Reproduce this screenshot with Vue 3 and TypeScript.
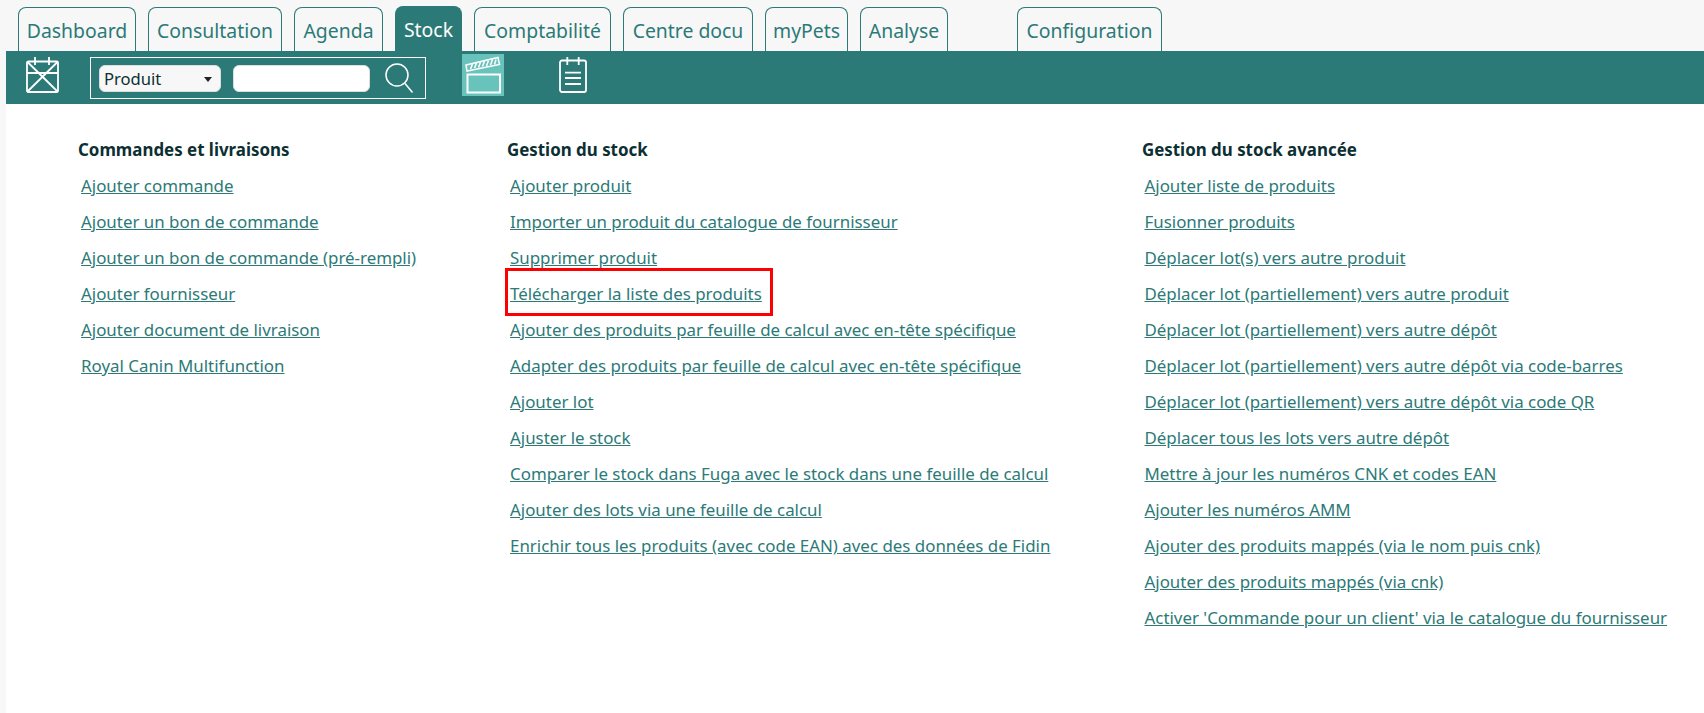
<script setup lang="ts">
const tabs = [
  { label: 'Dashboard', w: 118 },
  { label: 'Consultation', w: 134 },
  { label: 'Agenda', w: 89 },
  { label: 'Stock', w: 67, active: true },
  { label: 'Comptabilité', w: 137 },
  { label: 'Centre docu', w: 130 },
  { label: 'myPets', w: 83 },
  { label: 'Analyse', w: 88 },
]
const columns = [
  { title: 'Commandes et livraisons', cls: 'c1', links: ['Ajouter commande', 'Ajouter un bon de commande', 'Ajouter un bon de commande (pré-rempli)', 'Ajouter fournisseur', 'Ajouter document de livraison', 'Royal Canin Multifunction'] },
  { title: 'Gestion du stock', cls: 'c2', links: ['Ajouter produit', 'Importer un produit du catalogue de fournisseur', 'Supprimer produit', 'Télécharger la liste des produits', 'Ajouter des produits par feuille de calcul avec en-tête spécifique', 'Adapter des produits par feuille de calcul avec en-tête spécifique', 'Ajouter lot', 'Ajuster le stock', 'Comparer le stock dans Fuga avec le stock dans une feuille de calcul', 'Ajouter des lots via une feuille de calcul', 'Enrichir tous les produits (avec code EAN) avec des données de Fidin'] },
  { title: 'Gestion du stock avancée', cls: 'c3', links: ['Ajouter liste de produits', 'Fusionner produits', 'Déplacer lot(s) vers autre produit', 'Déplacer lot (partiellement) vers autre produit', 'Déplacer lot (partiellement) vers autre dépôt', 'Déplacer lot (partiellement) vers autre dépôt via code-barres', 'Déplacer lot (partiellement) vers autre dépôt via code QR', 'Déplacer tous les lots vers autre dépôt', 'Mettre à jour les numéros CNK et codes EAN', 'Ajouter les numéros AMM', 'Ajouter des produits mappés (via le nom puis cnk)', 'Ajouter des produits mappés (via cnk)', "Activer 'Commande pour un client' via le catalogue du fournisseur"] },
]
</script>

<template>
  <div class="page">
    <nav class="tabs">
      <a v-for="t in tabs" :key="t.label" class="tab" :class="{ active: t.active }" :style="{ width: t.w + 'px' }">{{ t.label }}</a>
      <a class="tab config">Configuration</a>
    </nav>
    <div class="bar">
      <svg class="ico cal" width="36" height="38" viewBox="0 0 36 38" fill="none" stroke="#fff" stroke-width="1.8">
        <rect x="2" y="4.500" width="31" height="30.500" rx="1.500" />
        <path d="M10 0v8M24 0v8M2 16h31M2 4.500L33 35M33 4.500L2 35" />
      </svg>
      <div class="search">
        <div class="select">Produit<span class="caret"></span></div>
        <div class="input"></div>
        <svg class="lens" width="30" height="31" viewBox="0 0 30 31" fill="none" stroke="#fff" stroke-width="1.5">
          <circle cx="12" cy="12" r="11" />
          <path d="M20 20.500l7.500 9" />
        </svg>
      </div>
      <div class="clap">
        <svg width="42" height="42" viewBox="0 0 42 42" fill="none" stroke="#fff" stroke-width="2">
          <rect x="5.500" y="20.500" width="32.500" height="18" />
          <path d="M4 11L36 3.500l1.500 7L5 17z" stroke-width="1.500" />
          <path d="M8.500 15l2-5M12.500 14l2-5M16.500 13.500l2-5.500M20.500 12.500l2-5.500M24.500 12l2-5.500M28.500 11l2-5.500M32.500 10.500l1.500-5" stroke-width="1.500" />
        </svg>
      </div>
      <svg class="ico note" width="30" height="38" viewBox="0 0 30 38" fill="none" stroke="#fff" stroke-width="1.800">
        <rect x="2" y="5.500" width="26" height="31.500" rx="2" />
        <path d="M9.300 2v8M20.700 2v8M7 17.700h16M7 23h16M7 29h16" />
      </svg>
    </div>
    <main class="content">
      <section v-for="c in columns" :key="c.title" class="col" :class="c.cls">
        <h3>{{ c.title }}</h3>
        <a v-for="l in c.links" :key="l" class="link">{{ l }}</a>
      </section>
      <div class="mark"></div>
    </main>
  </div>
</template>

<style>
html, body { margin: 0; background: #fff; }
</style>

<style scoped>
.page { width: 1704px; height: 713px; overflow: hidden; font-family: "Noto Sans", "Open Sans", sans-serif; background: #f7f7f7; }
.tabs { height: 51px; padding-left: 18px; box-sizing: border-box; background: #f7f7f7; display: flex; align-items: flex-end; gap: 12px; }
.tab { box-sizing: border-box; height: 44px; padding-top: 1px; border: 1px solid #2c7a77; border-bottom: none; border-radius: 8px 8px 0 0; color: #2c7a77; font-size: 19.4px; display: flex; align-items: center; justify-content: center; background: #f7f7f7; }
.tab.active { height: 45px; background: #2c7a77; color: #fff; }
.tab.config { margin-left: 57px; width: 145px; }
.bar { height: 53px; margin-left: 6px; background: #2c7a77; display: flex; align-items: flex-start; position: relative; }
.ico { flex: none; }
.cal { margin: 6px 0 0 19px; }
.search { box-sizing: border-box; margin: 6px 0 0 29px; width: 336px; height: 42px; border: 1px solid #fff; display: flex; align-items: center; padding: 0 0 0 8px; }
.select { box-sizing: border-box; position: relative; width: 122px; height: 27px; background: #f7f7f7; border: 1px solid #ddd; border-radius: 6px; color: #0b2f33; font-size: 16.6px; line-height: 25px; padding-left: 4px; }
.caret { position: absolute; right: 8px; top: 11px; border: 4px solid transparent; border-top: 5px solid #222; border-bottom: none; }
.input { box-sizing: border-box; width: 137px; height: 27px; margin-left: 12px; background: #fff; border: 1px solid #ddd; border-radius: 6px; }
.lens { margin-left: 15px; }
.clap { margin: 3px 0 0 36px; width: 42px; height: 42px; background: #69c3bd; display: flex; }
.note { margin: 4px 0 0 54px; }
.content { position: relative; margin-left: 6px; height: 609px; background: #fff; }
.col { position: absolute; top: 34px; display: flex; flex-direction: column; align-items: flex-start; }
.c1 { left: 72px; }
.c2 { left: 501px; }
.c3 { left: 1136px; }
h3 { margin: 0 0 6px; font-size: 16.9px; line-height: 24px; font-weight: 700; color: #0c2f33; }
.link { margin-left: 3px; height: 36px; font-size: 16.9px; line-height: 36px; color: #2c7a77; text-decoration: underline; white-space: nowrap; }
.c3 .link { margin-left: 2.5px; }
.mark { position: absolute; left: 499px; top: 164px; width: 268px; height: 48px; box-sizing: border-box; border: 3px solid #f00; }
</style>
